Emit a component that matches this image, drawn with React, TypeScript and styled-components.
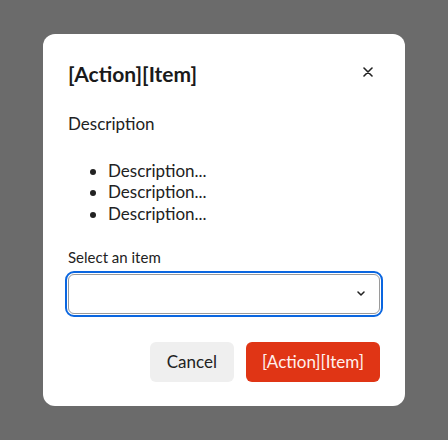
import React from "react";
import styled, { createGlobalStyle } from "styled-components";

const Global = createGlobalStyle`
  html, body { margin: 0; padding: 0; }
  body { font-family: Lato, "Noto Sans", sans-serif; color: #222; }
  * { box-sizing: border-box; }
`;

const Backdrop = styled.div`
  width: 100vw;
  height: 100vh;
  background: #6b6b6b;
  display: flex;
  align-items: center;
  justify-content: center;
`;

const Dialog = styled.div`
  width: 362px;
  background: #fff;
  border-radius: 12px;
  padding: 26px 25px 24px 25px;
  display: flex;
  flex-direction: column;
`;

const Header = styled.div`
  display: flex;
  justify-content: space-between;
  align-items: flex-start;
`;

const Title = styled.h2`
  margin: 0;
  font-size: 21px;
  line-height: 28px;
  font-weight: 700;
  color: #1a1a1a;
`;

const CloseButton = styled.button`
  width: 24px;
  height: 24px;
  border: none;
  background: transparent;
  padding: 0;
  display: flex;
  align-items: center;
  justify-content: center;
  cursor: pointer;
  color: #222;
`;

const Text = styled.p`
  margin: 24px 0 0;
  font-size: 17px;
  line-height: 24px;
`;

const List = styled.ul`
  margin: 24px 0 0;
  padding-left: 40px;
  font-size: 17px;
  line-height: 21.3px;
`;

const Label = styled.label`
  margin-top: 23px;
  font-size: 15px;
  line-height: 20px;
  display: block;
`;

const SelectBox = styled.div`
  margin-top: 7px;
  height: 40px;
  border: 1px solid #9a9a9a;
  border-radius: 6px;
  outline: 2px solid #0a66e0;
  outline-offset: 1px;
  display: flex;
  align-items: center;
  justify-content: flex-end;
  padding-right: 14px;
`;

const Footer = styled.div`
  margin-top: 28px;
  display: flex;
  justify-content: flex-end;
  gap: 12px;
`;

const Button = styled.button<{ $primary?: boolean }>`
  height: 40px;
  padding: ${(p) => (p.$primary ? "0 16px" : "0 17px")};
  border: none;
  border-radius: 6px;
  font-family: inherit;
  font-size: 17px;
  background: ${(p) => (p.$primary ? "#e03515" : "#efefef")};
  color: ${(p) => (p.$primary ? "#fff1ee" : "#222")};
  cursor: pointer;
`;

export default function App() {
  return (
    <>
      <Global />
      <Backdrop>
        <Dialog>
          <Header>
            <Title>[Action][Item]</Title>
            <CloseButton aria-label="Close">
              <svg width="10" height="10" viewBox="0 0 10 10">
                <path d="M1 1 L9 9 M9 1 L1 9" stroke="currentColor" strokeWidth="1.6" strokeLinecap="round" />
              </svg>
            </CloseButton>
          </Header>
          <Text>Description</Text>
          <List>
            <li>Description...</li>
            <li>Description...</li>
            <li>Description...</li>
          </List>
          <Label>Select an item</Label>
          <SelectBox>
            <svg width="8" height="5" viewBox="0 0 8 5">
              <path d="M1 1 L4 4 L7 1" stroke="#222" strokeWidth="1.5" fill="none" strokeLinecap="round" strokeLinejoin="round" />
            </svg>
          </SelectBox>
          <Footer>
            <Button>Cancel</Button>
            <Button $primary>[Action][Item]</Button>
          </Footer>
        </Dialog>
      </Backdrop>
    </>
  );
}
